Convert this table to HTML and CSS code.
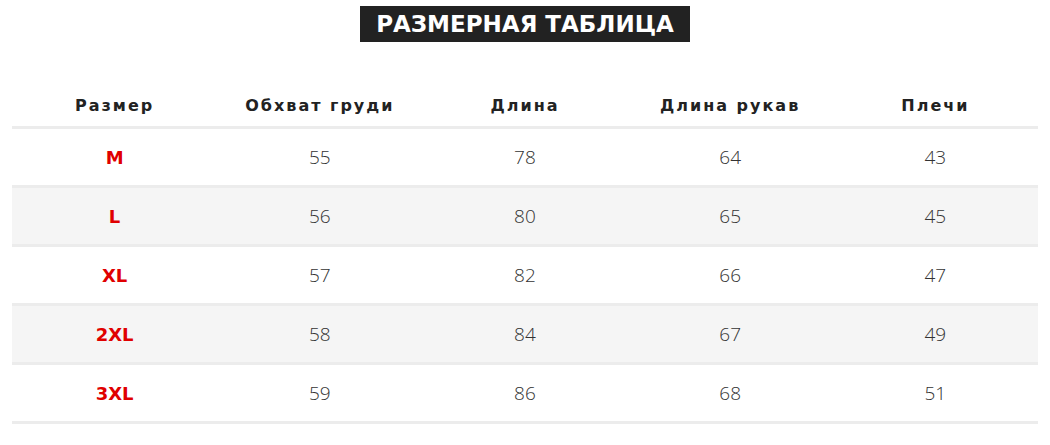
FILE: index.html
```html
<!DOCTYPE html>
<html lang="ru">
<head>
<meta charset="utf-8">
<link rel="stylesheet" href="styles.css">
</head>
<body>
<div class="page">
  <div class="title-wrap"><h1 class="title">РАЗМЕРНАЯ ТАБЛИЦА</h1></div>
  <table class="sizes">
    <thead>
      <tr><th>Размер</th><th>Обхват груди</th><th>Длина</th><th>Длина рукав</th><th>Плечи</th></tr>
    </thead>
    <tbody>
      <tr><td class="size">M</td><td>55</td><td>78</td><td>64</td><td>43</td></tr>
      <tr class="alt"><td class="size">L</td><td>56</td><td>80</td><td>65</td><td>45</td></tr>
      <tr><td class="size">XL</td><td>57</td><td>82</td><td>66</td><td>47</td></tr>
      <tr class="alt"><td class="size">2XL</td><td>58</td><td>84</td><td>67</td><td>49</td></tr>
      <tr><td class="size">3XL</td><td>59</td><td>86</td><td>68</td><td>51</td></tr>
    </tbody>
  </table>
</div>
</body>
</html>
```
FILE: styles.css
```css
html, body { margin: 0; padding: 0; background: #fff; }
body { font-family: "Open Sans", sans-serif; color: #333; }
.page { padding: 6px 12px 0; }
.title-wrap { display: flex; justify-content: center; }
.title {
  margin: 0;
  background: #222;
  color: #fff;
  font-family: "DejaVu Sans", sans-serif;
  font-size: 23px;
  font-weight: 700;
  line-height: 36px;
  height: 36px;
  padding: 0 16px;
  letter-spacing: 0;
}
.sizes {
  width: 100%;
  margin-top: 38px;
  border-collapse: collapse;
  table-layout: fixed;
}
.sizes th {
  font-family: "DejaVu Sans", sans-serif;
  font-size: 16px;
  font-weight: 700;
  letter-spacing: 2px;
  color: #222;
  height: 42px;
  padding: 4px 0 0;
  text-align: center;
  border-bottom: 3px solid #ececec;
}
.sizes td {
  height: 56px;
  padding: 0;
  text-align: center;
  font-size: 19px;
  font-weight: 300;
  color: #333;
  border-bottom: 3px solid #ececec;
}
.sizes tr.alt td { background: #f5f5f5; }
.sizes td.size { color: #e00000; font-family: "DejaVu Sans", sans-serif; font-weight: 700; font-size: 18px; }
```
